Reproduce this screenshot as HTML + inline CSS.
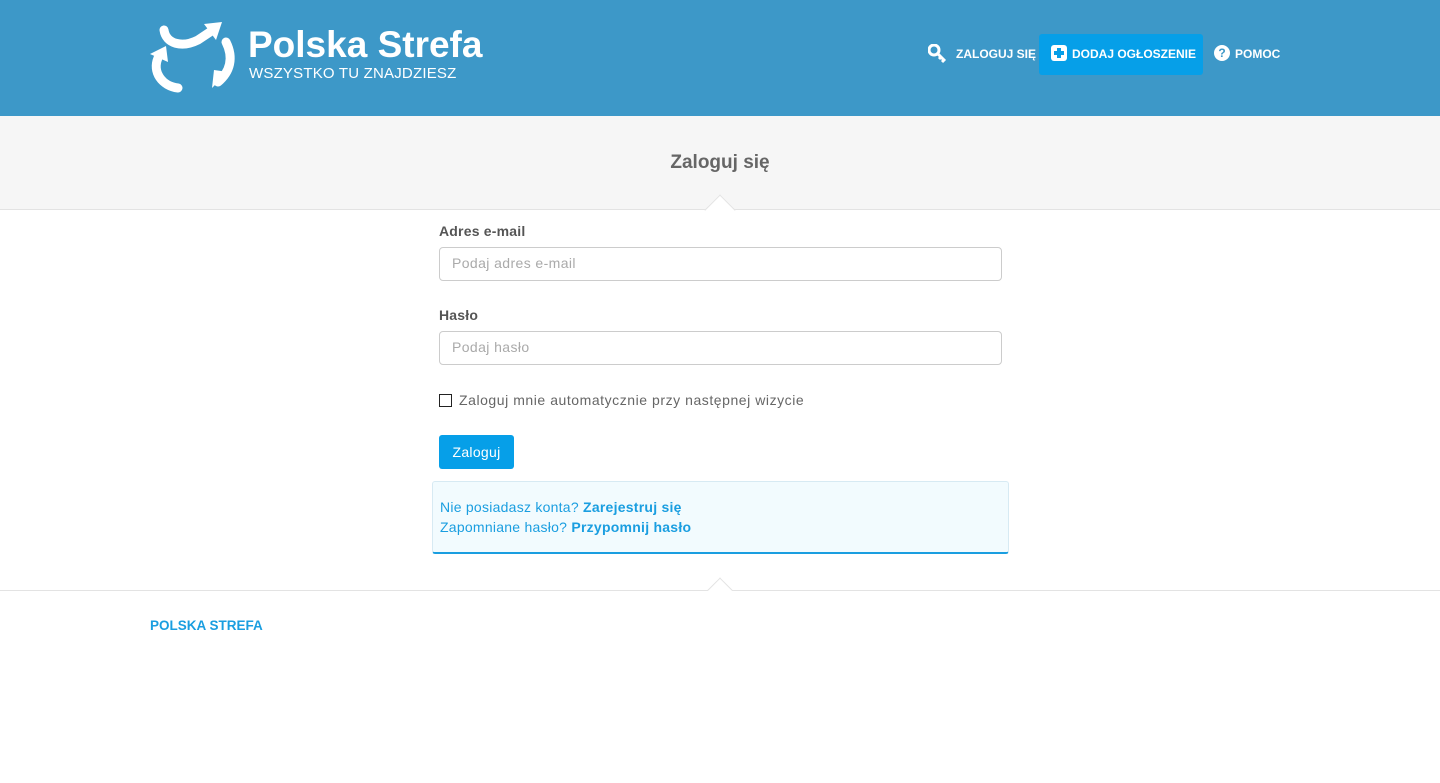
<!DOCTYPE html>
<html><head><meta charset="utf-8"><style>
*{box-sizing:border-box;margin:0;padding:0}
body{width:1440px;height:783px;background:#fff;font-family:"Liberation Sans","DejaVu Sans",sans-serif;color:#555;position:relative;overflow:hidden}
.hdr{position:absolute;left:0;top:0;width:1440px;height:116px;background:#3d98c8}
.band{position:absolute;left:0;top:116px;width:1440px;height:94px;background:#f6f6f6;border-bottom:1px solid #e3e3e3}
.title{position:absolute;top:152px;left:0;width:1440px;text-align:center;font-size:19px;font-weight:bold;color:#666}
.notch{position:absolute;width:22px;height:22px;background:#fff;border-left:1px solid #e3e3e3;border-top:1px solid #e3e3e3;transform:rotate(45deg)}
.lbl{position:absolute;left:439px;font-size:14px;font-weight:bold;color:#555;letter-spacing:0.2px}
.inp{position:absolute;left:439px;width:563px;height:34px;border:1px solid #ccc;border-radius:4px;font-size:14px;color:#aaa;padding:7px 12px;letter-spacing:0.4px}
.nav{position:absolute;top:47px;color:#fff;font-size:12px;font-weight:bold}
</style></head><body>
<div class="hdr">
<svg style="position:absolute;left:148px;top:16px" width="92" height="80" viewBox="0 0 92 80">
<g fill="none" stroke="#fff" stroke-width="9" stroke-linecap="round">
<path d="M16 14 C18 28 34 32 50 24 L62 16"/>
<path d="M78 26 C86 42 82 56 70 66"/>
<path d="M10 42 C4 56 14 70 30 72"/>
</g>
<g fill="#fff"><path d="M56 8 L74 6 L68 24 Z"/><path d="M64 72 L80 56 L66 54 Z"/><path d="M2 38 L18 30 L20 46 Z"/></g>
</svg>
<div style="position:absolute;left:248px;top:24px;font-size:37px;font-weight:bold;color:#fff;letter-spacing:0px">Polska Strefa</div>
<div style="position:absolute;left:249px;top:65px;font-size:15px;color:#fff;letter-spacing:0.2px">WSZYSTKO TU ZNAJDZIESZ</div>
<svg style="position:absolute;left:928px;top:44px" width="20" height="20" viewBox="0 0 20 20"><circle cx="6" cy="6" r="5" fill="none" stroke="#fff" stroke-width="3"/><path d="M9 9 L17 17 M13 13 L11 15 M16 16 L14 18" stroke="#fff" stroke-width="3"/></svg>
<div class="nav" style="left:956px">ZALOGUJ SIĘ</div>
<div style="position:absolute;left:1039px;top:34px;width:164px;height:41px;background:#069fe8;border-radius:3px"></div>
<div style="position:absolute;left:1051px;top:45px;width:16px;height:16px;background:#fff;border-radius:3px"></div>
<div style="position:absolute;left:1057px;top:48px;width:4px;height:10px;background:#069fe8"></div>
<div style="position:absolute;left:1054px;top:51px;width:10px;height:4px;background:#069fe8"></div>
<div class="nav" style="left:1072px">DODAJ OGŁOSZENIE</div>
<div style="position:absolute;left:1214px;top:45px;width:16px;height:16px;background:#fff;border-radius:50%;color:#3d98c8;font-size:12px;font-weight:bold;text-align:center;line-height:16px">?</div>
<div class="nav" style="left:1235px">POMOC</div>
</div>
<div class="band"></div>
<div class="notch" style="left:709px;top:199px"></div>
<div class="title">Zaloguj się</div>
<div class="lbl" style="top:223px">Adres e-mail</div>
<div class="inp" style="top:247px">Podaj adres e-mail</div>
<div class="lbl" style="top:307px">Hasło</div>
<div class="inp" style="top:331px">Podaj hasło</div>
<div style="position:absolute;left:439px;top:394px;width:13px;height:13px;border:1px solid #222"></div>
<div style="position:absolute;left:459px;top:392px;font-size:14px;color:#666;letter-spacing:0.55px">Zaloguj mnie automatycznie przy następnej wizycie</div>
<div style="position:absolute;left:439px;top:435px;width:75px;height:34px;background:#069fe8;border-radius:3px;color:#fff;font-size:14px;text-align:center;line-height:34px;letter-spacing:0.3px">Zaloguj</div>
<div style="position:absolute;left:432px;top:481px;width:577px;height:73px;background:#f2fbfe;border:1px solid #d7eaf3;border-bottom:2px solid #1a9ee0;border-radius:3px;color:#1a9ee0;font-size:14px;line-height:20px;padding:15px 7px;letter-spacing:0.25px">Nie posiadasz konta? <b>Zarejestruj się</b><br>Zapomniane hasło? <b>Przypomnij hasło</b></div>
<div style="position:absolute;left:0;top:590px;width:1440px;height:1px;background:#e3e3e3"></div>
<div class="notch" style="left:709px;top:582px;width:22px;height:22px;background:#fff"></div>
<div style="position:absolute;left:700px;top:591px;width:40px;height:14px;background:#fff"></div>
<div style="position:absolute;left:150px;top:618px;font-size:13.5px;font-weight:bold;color:#1a9ee0">POLSKA STREFA</div>
</body></html>
